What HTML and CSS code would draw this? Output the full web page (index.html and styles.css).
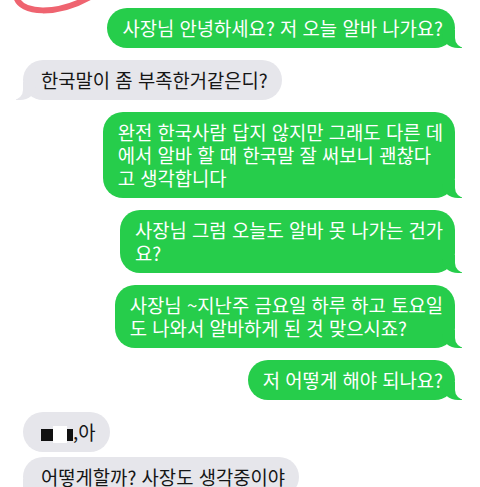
FILE: index.html
```html
<!DOCTYPE html>
<html lang="ko">
<head>
    <meta charset="UTF-8">
    <meta name="viewport" content="width=device-width, initial-scale=1.0">
    <title>메시지</title>
    <link rel="stylesheet" href="styles.css">
</head>
<body>
    <div class="chat">
        <!-- 캡처에 그려진 빨간 동그라미 -->
        <svg class="scribble" width="120" height="20" viewBox="0 0 120 20">
            <path d="M16 -4 C 20 15, 58 15, 90 -3" fill="none" stroke="#ef6470" stroke-width="6" stroke-linecap="round"/>
        </svg>

        <div class="bubble sent">사장님 안녕하세요? 저 오늘 알바 나가요?</div>
        <div class="bubble received">한국말이 좀 부족한거같은디?</div>
        <div class="bubble sent">완전 한국사람 답지 않지만 그래도 다른 데<br>에서 알바 할 때 한국말 잘 써보니 괜찮다<br>고 생각합니다</div>
        <div class="bubble sent">사장님 그럼 오늘도 알바 못 나가는 건가<br>요?</div>
        <div class="bubble sent">사장님 ~지난주 금요일 하루 하고 토요일<br>도 나와서 알바하게 된 것 맞으시죠?</div>
        <div class="bubble sent">저 어떻게 해야 되나요?</div>
        <div class="bubble received no-tail"><span class="censor"></span><span class="censor-gap"></span><span class="censor thin"></span>,아</div>
        <div class="bubble received tight">어떻게할까? 사장도 생각중이야</div>
    </div>
</body>
</html>
```

FILE: styles.css
```css
body {
    margin: 0;
    background-color: #ffffff;
    font-family: "Noto Sans CJK KR", "Noto Sans", sans-serif;
}
.chat {
    position: relative;
    display: flex;
    flex-direction: column;
    gap: 12px;
    padding-top: 8px;
}
.scribble {
    position: absolute;
    top: 0;
    left: 0;
}
.bubble {
    position: relative;
    font-size: 18.8px;
    line-height: 23px;
    border-radius: 20px;
    white-space: nowrap;
}
.sent {
    align-self: flex-end;
    margin-right: 25px;
    padding: 8px 12px 9px 15px;
    background-color: #26cd4b;
    color: #ffffff;
}
.received {
    align-self: flex-start;
    margin-left: 23px;
    padding: 8px 14px 9px 18px;
    background-color: #e6e6eb;
    color: #151515;
}
.tight {
    margin-top: -7px;
}

/* 말풍선 꼬리 */
.sent::before,
.received::before {
    content: "";
    position: absolute;
    bottom: 0;
    width: 20px;
    height: 18px;
}
.sent::after,
.received::after {
    content: "";
    position: absolute;
    bottom: 0;
    width: 26px;
    height: 18px;
    background-color: #ffffff;
}
.sent::before {
    right: -7px;
    background-color: #26cd4b;
    border-bottom-left-radius: 16px 14px;
}
.sent::after {
    right: -26px;
    border-bottom-left-radius: 10px;
}
.received::before {
    left: -7px;
    background-color: #e6e6eb;
    border-bottom-right-radius: 16px 14px;
}
.received::after {
    left: -26px;
    border-bottom-right-radius: 10px;
}
.no-tail::before,
.no-tail::after {
    display: none;
}

/* 이름 가림 */
.censor {
    display: inline-block;
    width: 12px;
    height: 12px;
    background-color: #111111;
    vertical-align: -1px;
}
.censor.thin {
    width: 6px;
}
.censor-gap {
    display: inline-block;
    width: 14px;
    height: 17px;
    background-color: #ffffff;
    vertical-align: -3px;
}
```
